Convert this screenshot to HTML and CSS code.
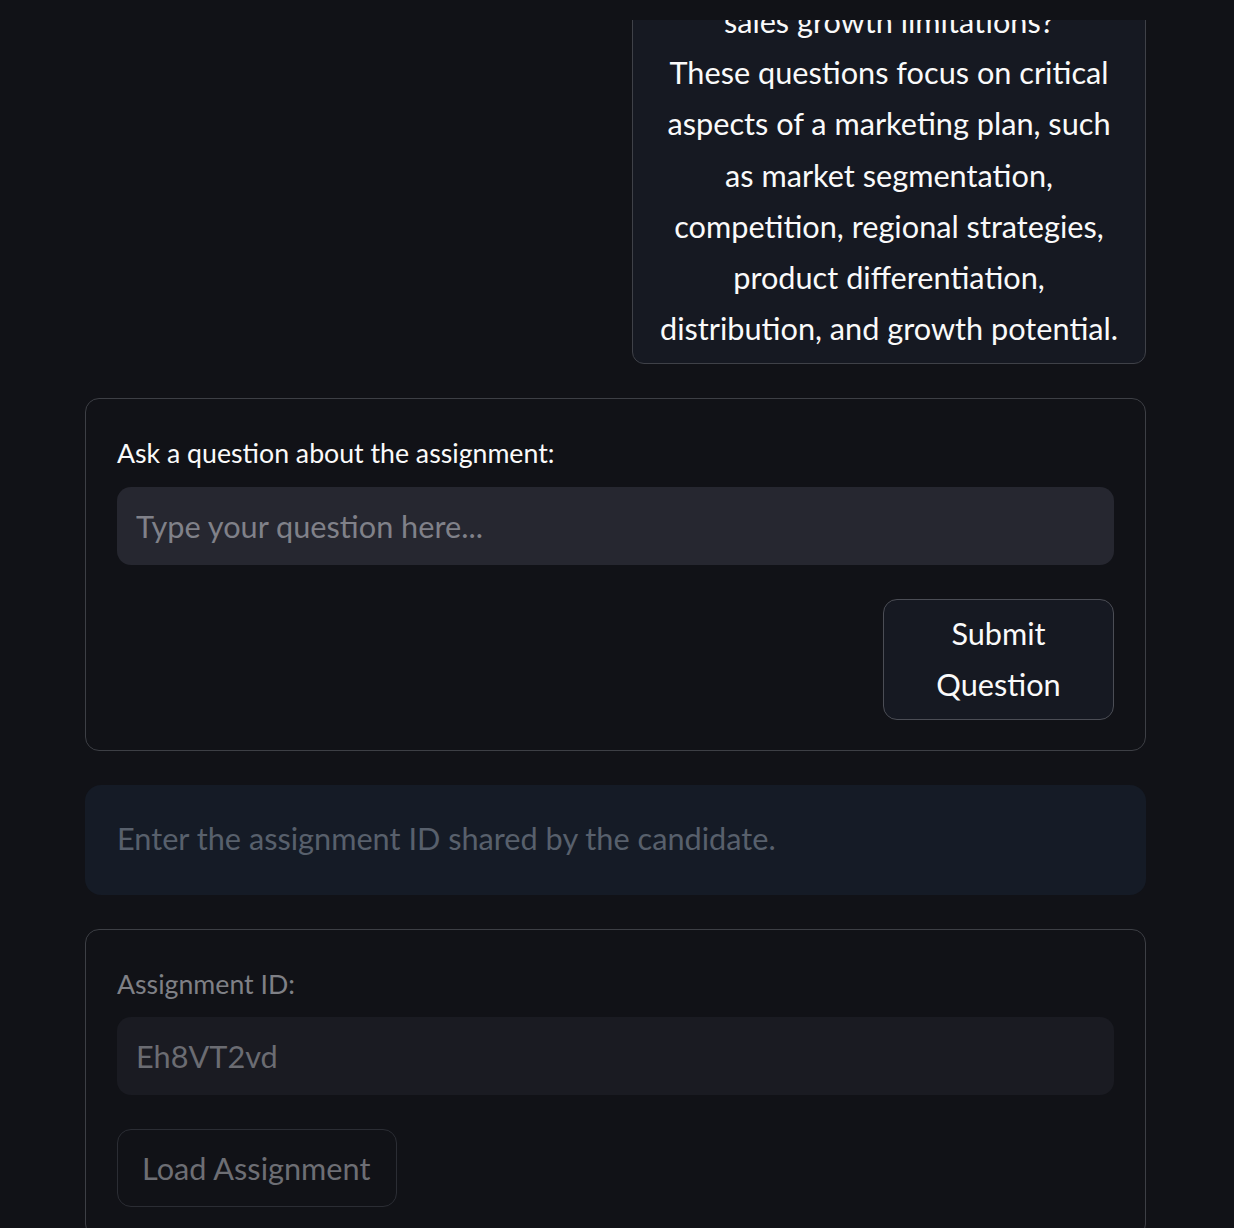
FILE: index.html
```html
<!DOCTYPE html>
<html lang="en">
<head>
<meta charset="utf-8">
<title>Assignment Q&amp;A</title>
<link rel="stylesheet" href="styles.css">
</head>
<body>
<header class="topbar"></header>
<main class="main">
  <div class="chat">
    <div class="bubble">
      <p class="bubble-text">sales growth limitations?<br>These questions focus on critical<br>aspects of a marketing plan, such<br>as market segmentation,<br>competition, regional strategies,<br>product differentiation,<br>distribution, and growth potential.</p>
    </div>
  </div>

  <form class="card">
    <label class="field-label" for="q">Ask a question about the assignment:</label>
    <input class="text-input" id="q" type="text" placeholder="Type your question here...">
    <div class="actions">
      <button class="btn" type="button">Submit Question</button>
    </div>
  </form>

  <div class="info">Enter the assignment ID shared by the candidate.</div>

  <form class="card card-stale">
    <label class="field-label" for="aid">Assignment ID:</label>
    <input class="text-input" id="aid" type="text" value="Eh8VT2vd" disabled>
    <div class="actions actions-left">
      <button class="btn btn-load" type="button" disabled>Load Assignment</button>
    </div>
  </form>
</main>
</body>
</html>
```

FILE: styles.css
```css
html, body {
  margin: 0;
  padding: 0;
  background: #111217;
  overflow: hidden;
}

body {
  font-family: "Lato", "Noto Sans", sans-serif;
  color: #fafafa;
  font-size: 30.7px;
  line-height: 51.2px;
}

.topbar {
  position: fixed;
  top: 0;
  left: 0;
  right: 0;
  height: 20px;
  background: #111217;
  z-index: 10;
}

.main {
  width: 1061px;
  margin: -5px 0 0 85px;
  display: flex;
  flex-direction: column;
  gap: 34px;
}

.chat {
  display: flex;
  justify-content: flex-end;
}

.bubble {
  width: 514px;
  box-sizing: border-box;
  background: #161922;
  border: 1px solid #3f4148;
  border-radius: 12px;
  padding: 0 12px 9px;
  text-align: center;
}

.bubble-text {
  margin: 0;
  white-space: nowrap;
}

.card {
  margin: 0;
  border: 1px solid #3d3f45;
  border-radius: 14px;
  padding: 32px 31px 30px;
  display: flex;
  flex-direction: column;
}

.field-label {
  display: block;
  font-size: 26.7px;
  line-height: 44.8px;
  margin-bottom: 11px;
  color: #fafafa;
}

.text-input {
  box-sizing: border-box;
  width: 100%;
  height: 78px;
  margin: 0;
  border: none;
  outline: none;
  border-radius: 14px;
  background: #262730;
  padding: 0 19px;
  font-family: inherit;
  font-size: 30.7px;
  color: #fafafa;
}

.text-input::placeholder {
  color: #808189;
  opacity: 1;
}

.actions {
  display: flex;
  justify-content: flex-end;
  margin-top: 34px;
}

.actions-left {
  justify-content: flex-start;
}

.btn {
  width: 231px;
  box-sizing: border-box;
  padding: 8px 24px;
  border: 1px solid #4b4d55;
  border-radius: 14px;
  background: #161922;
  color: #fafafa;
  font-family: inherit;
  font-size: 30.7px;
  line-height: 51.2px;
}

.info {
  background: #151b26;
  border-radius: 16px;
  padding: 28px 32px 30.8px;
  color: #58606c;
}

.card-stale .field-label {
  color: #7f8086;
}

.card-stale .text-input {
  background: #1a1b22;
  color: #6b6c72;
  -webkit-text-fill-color: #6b6c72;
}

.btn-load {
  width: 280px;
  padding: 12.4px 24px;
  border-color: #2b2d34;
  background: transparent;
  color: #6d6e74;
  text-align: left;
}
```
